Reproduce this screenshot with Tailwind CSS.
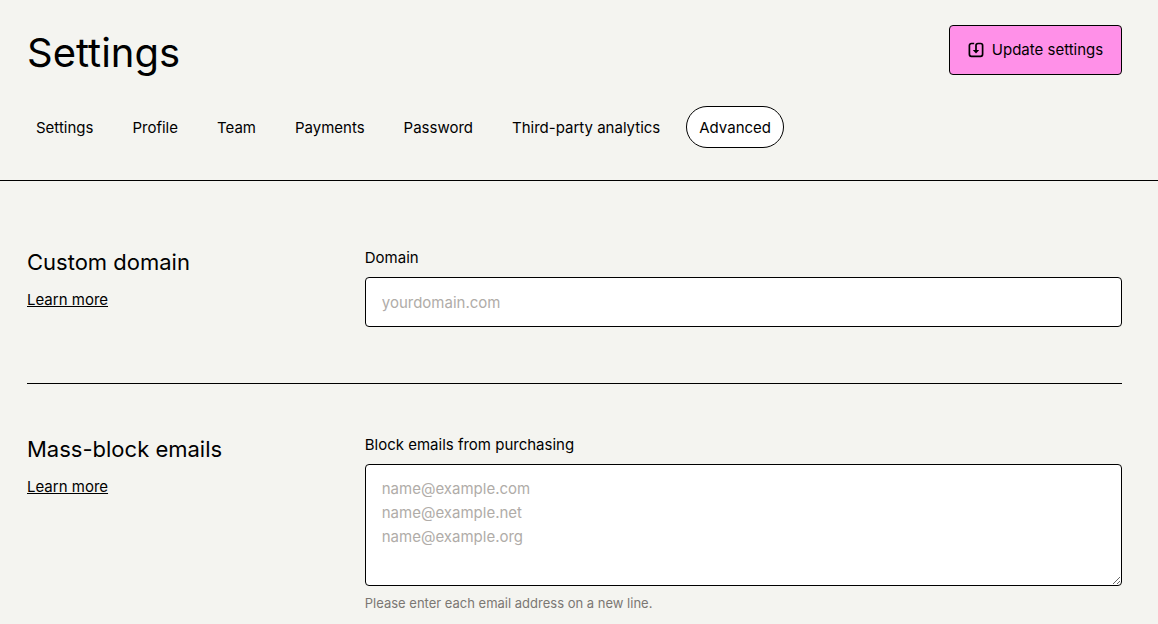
<!DOCTYPE html>
<html lang="en">
<head>
<meta charset="utf-8">
<meta name="viewport" content="width=device-width, initial-scale=1">
<title>Settings</title>
<script src="https://cdn.jsdelivr.net/npm/@tailwindcss/browser@4"></script>
</head>
<body class="bg-[#f4f4f0] font-['Inter','Liberation_Sans',sans-serif] text-[15px] leading-[26px] text-black">
<header class="border-b border-black pt-[25px] pr-9 pb-8 pl-[27px]">
  <div class="flex items-start justify-between">
    <h1 class="text-[40px] leading-[56px]">Settings</h1>
    <button type="button" class="flex h-[50px] min-w-[173px] items-center justify-center gap-2 rounded border border-black bg-[#ff90e8] px-4">
      <svg class="size-4" viewBox="0 0 16 16" fill="none" stroke="currentColor" stroke-width="1.7" aria-hidden="true">
        <path d="M6.2 1.5H3.4A2 2 0 0 0 1.4 3.5V12.3A2 2 0 0 0 3.4 14.3H12.6A2 2 0 0 0 14.6 12.3V3.5A2 2 0 0 0 12.6 1.5H10A2 2 0 0 0 8 3.5V9"/>
        <path d="M4.8 8H11.2L8 11.4Z" fill="currentColor" stroke="none"/>
      </svg>
      Update settings
    </button>
  </div>
  <nav class="-ml-1 mt-[25px] flex gap-[13px]" aria-label="Settings sections">
    <a href="#" class="rounded-full border border-transparent px-3 pt-2 pb-1.5">Settings</a>
    <a href="#" class="rounded-full border border-transparent px-3 pt-2 pb-1.5">Profile</a>
    <a href="#" class="rounded-full border border-transparent px-3 pt-2 pb-1.5">Team</a>
    <a href="#" class="rounded-full border border-transparent px-3 pt-2 pb-1.5">Payments</a>
    <a href="#" class="rounded-full border border-transparent px-3 pt-2 pb-1.5">Password</a>
    <a href="#" class="rounded-full border border-transparent px-3 pt-2 pb-1.5">Third-party analytics</a>
    <a href="#" aria-current="page" class="rounded-full border border-black bg-white px-3 pt-2 pb-1.5">Advanced</a>
  </nav>
</header>
<main class="pr-9 pl-[27px]">
  <section class="grid grid-cols-[25%_1fr] gap-16 pt-16 pb-14">
    <div>
      <h2 class="mb-2 text-[22px] leading-[34px]">Custom domain</h2>
      <a href="#" class="underline">Learn more</a>
    </div>
    <div class="flex flex-col gap-1.5">
      <label for="domain">Domain</label>
      <input id="domain" type="text" placeholder="yourdomain.com" class="h-[50px] w-full rounded border border-black bg-white px-4 placeholder:text-[#b0aca8]">
    </div>
  </section>
  <section class="grid grid-cols-[25%_1fr] gap-16 border-t border-black pt-12 pb-14">
    <div>
      <h2 class="mb-2 text-[22px] leading-[34px]">Mass-block emails</h2>
      <a href="#" class="underline">Learn more</a>
    </div>
    <div class="flex flex-col gap-1.5">
      <label for="emails">Block emails from purchasing</label>
      <textarea id="emails" rows="4" aria-describedby="emails-help" placeholder="name@example.com&#10;name@example.net&#10;name@example.org" class="h-[122px] w-full rounded border border-black bg-white px-4 py-3 leading-6 placeholder:text-[#b0aca8]"></textarea>
      <small id="emails-help" class="text-[13px] leading-[22px] text-[#7b7773]">Please enter each email address on a new line.</small>
    </div>
  </section>
</main>
</body>
</html>
